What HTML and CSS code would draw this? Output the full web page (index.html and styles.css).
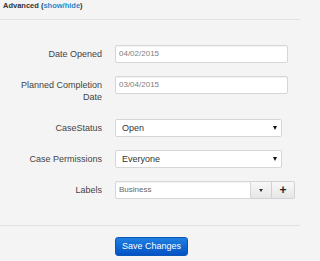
FILE: index.html
```html
<!DOCTYPE html>
<html>
<head>
<meta charset="utf-8">
<link rel="stylesheet" href="styles.css">
</head>
<body>
<div class="page">
  <div class="adv-header">Advanced (<a class="toggle">show/hide</a>)</div>
  <div class="form">
    <div class="row">
      <div class="label">Date Opened</div>
      <div class="input date">04/02/2015</div>
    </div>
    <div class="row">
      <div class="label">Planned Completion Date</div>
      <div class="input date">03/04/2015</div>
    </div>
    <div class="row">
      <div class="label">CaseStatus</div>
      <div class="select"><span>Open</span><span class="arrow"></span></div>
    </div>
    <div class="row">
      <div class="label">Case Permissions</div>
      <div class="select"><span>Everyone</span><span class="arrow"></span></div>
    </div>
    <div class="row">
      <div class="label">Labels</div>
      <div class="group">
        <div class="input tag">Business</div>
        <div class="gbtn"><span class="caret"></span></div>
        <div class="gbtn plus">+</div>
      </div>
    </div>
  </div>
  <div class="actions">
    <button class="save">Save Changes</button>
  </div>
</div>
</body>
</html>
```

FILE: styles.css
```css
html, body {
  margin: 0;
  padding: 0;
  background: #f4f4f4;
}
.page {
  width: 300px;
  height: 261px;
  font-family: "Liberation Sans", Arial, sans-serif;
  color: #444;
  background: #f4f4f4;
  overflow: hidden;
}
.adv-header {
  font-size: 7.5px;
  font-weight: bold;
  line-height: 12px;
  padding: 0 0 7px 3px;
  color: #333;
  border-bottom: 1px solid #e2e2e2;
}
.toggle {
  color: #2a87c8;
}
.form {
  padding: 25px 0 26px 0;
  border-bottom: 1px solid #e2e2e2;
  display: flex;
  flex-direction: column;
  gap: 13px;
}
.row {
  display: flex;
  align-items: flex-start;
  gap: 13px;
}
.label {
  width: 102px;
  flex: none;
  text-align: right;
  font-size: 9px;
  line-height: 12px;
  padding: 3px 0;
  color: #444;
  box-sizing: border-box;
}
.input {
  box-sizing: border-box;
  height: 18px;
  background: #fff;
  border: 1px solid #d6d6d6;
  border-radius: 2px;
  box-shadow: inset 0 1px 1px rgba(0,0,0,0.05);
  font-size: 8px;
  line-height: 16px;
  padding-left: 3px;
  color: #808080;
}
.date {
  width: 173px;
}
.select {
  box-sizing: border-box;
  width: 167px;
  height: 18px;
  background: #fff;
  border: 1px solid #d6d6d6;
  border-radius: 2px;
  display: flex;
  align-items: center;
  justify-content: space-between;
  padding: 0 4px 0 6px;
  font-size: 9px;
  color: #333;
}
.arrow {
  width: 0;
  height: 0;
  border-left: 2.5px solid transparent;
  border-right: 2.5px solid transparent;
  border-top: 4px solid #111;
}
.group {
  display: flex;
  height: 18px;
}
.tag {
  width: 136px;
  color: #666;
  border-radius: 2px 0 0 2px;
}
.gbtn {
  box-sizing: border-box;
  height: 18px;
  border: 1px solid #d2d2d2;
  border-left: none;
  background: linear-gradient(#f8f8f8, #e6e6e6);
  display: flex;
  align-items: center;
  justify-content: center;
  width: 21px;
}
.gbtn.plus {
  width: 23px;
  border-radius: 0 2px 2px 0;
  font-size: 12px;
  font-weight: bold;
  color: #222;
  line-height: 1;
}
.caret {
  width: 0;
  height: 0;
  border-left: 2.5px solid transparent;
  border-right: 2.5px solid transparent;
  border-top: 3px solid #333;
}
.actions {
  padding: 11px 0 0 115px;
}
.save {
  box-sizing: border-box;
  width: 73px;
  height: 19px;
  margin: 0;
  padding: 0;
  border: 1px solid #0a55b8;
  border-radius: 3px;
  background: linear-gradient(#1f7fe0, #0352c4);
  color: #fff;
  font-family: "Liberation Sans", Arial, sans-serif;
  font-size: 9px;
  line-height: 17px;
  display: block;
}
```
